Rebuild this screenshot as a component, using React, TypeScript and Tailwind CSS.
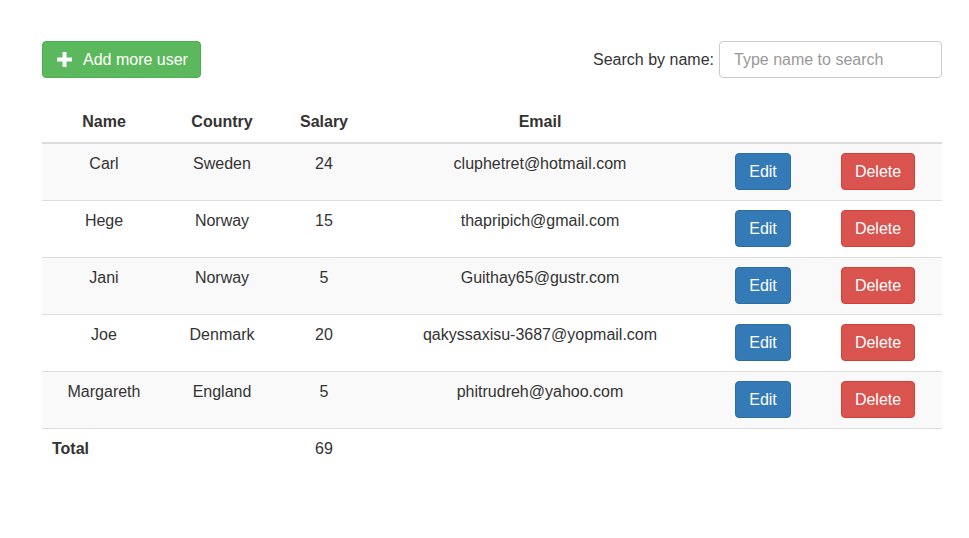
import { useState } from 'react';

interface User {
  name: string;
  country: string;
  salary: number;
  email: string;
}

const users: User[] = [
  { name: 'Carl', country: 'Sweden', salary: 24, email: 'cluphetret@hotmail.com' },
  { name: 'Hege', country: 'Norway', salary: 15, email: 'thapripich@gmail.com' },
  { name: 'Jani', country: 'Norway', salary: 5, email: 'Guithay65@gustr.com' },
  { name: 'Joe', country: 'Denmark', salary: 20, email: 'qakyssaxisu-3687@yopmail.com' },
  { name: 'Margareth', country: 'England', salary: 5, email: 'phitrudreh@yahoo.com' },
];

export default function App() {
  const [query, setQuery] = useState('');
  const rows = users.filter((u) => u.name.toLowerCase().includes(query.toLowerCase()));
  const total = rows.reduce((sum, u) => sum + u.salary, 0);

  return (
    <div className="min-h-screen bg-white text-[#333] text-[16px] leading-[20px] font-['Liberation_Sans',Arial,sans-serif]">
      <div className="w-[900px] ml-[42px] pt-[41px]">
        {/* Toolbar */}
        <div className="flex items-center justify-between">
          <button className="flex items-center h-[37px] w-[159px] pl-[14px] rounded-[4px] border border-[#4cae4c] bg-[#5cb85c] text-white">
            <svg width="15" height="15" viewBox="0 0 15 15" className="mr-[11px]">
              <path d="M5.5 0h4v5.5H15v4H9.5V15h-4V9.5H0v-4h5.5z" fill="white" />
            </svg>
            <span>Add more user</span>
          </button>
          <div className="flex items-center">
            <label className="mr-[5px]">Search by name:</label>
            <input
              value={query}
              onChange={(e) => setQuery(e.target.value)}
              placeholder="Type name to search"
              className="h-[37px] w-[223px] px-[14px] rounded-[4px] border border-[#ccc] outline-none placeholder:text-[#999]"
            />
          </div>
        </div>

        {/* Table */}
        <table className="mt-[23px] w-full table-fixed border-collapse">
          <colgroup>
            <col className="w-[124px]" />
            <col className="w-[112px]" />
            <col className="w-[92px]" />
            <col className="w-[340px]" />
            <col className="w-[104px]" />
            <col className="w-[128px]" />
          </colgroup>
          <thead>
            <tr className="border-b-2 border-[#ddd]">
              <th className="pt-[11px] pb-[10px] font-bold text-center">Name</th>
              <th className="pt-[11px] pb-[10px] font-bold text-center">Country</th>
              <th className="pt-[11px] pb-[10px] font-bold text-center">Salary</th>
              <th className="pt-[11px] pb-[10px] font-bold text-center">Email</th>
              <th></th>
              <th></th>
            </tr>
          </thead>
          <tbody>
            {rows.map((u, i) => (
              <tr key={u.name} className={`border-b border-[#ddd] ${i % 2 === 0 ? 'bg-[#f9f9f9]' : 'bg-white'}`}>
                <td className="pt-[10px] align-top text-center">{u.name}</td>
                <td className="pt-[10px] align-top text-center">{u.country}</td>
                <td className="pt-[10px] align-top text-center">{u.salary}</td>
                <td className="pt-[10px] align-top text-center">{u.email}</td>
                <td className="pt-[9px] pb-[10px] align-top text-left pl-[25px]">
                  <button className="h-[37px] w-[56px] rounded-[4px] border border-[#2e6da4] bg-[#337ab7] text-white">
                    Edit
                  </button>
                </td>
                <td className="pt-[9px] pb-[10px] align-top text-left pl-[27px]">
                  <button className="h-[37px] w-[74px] rounded-[4px] border border-[#d43f3a] bg-[#d9534f] text-white">
                    Delete
                  </button>
                </td>
              </tr>
            ))}
          </tbody>
          <tfoot>
            <tr>
              <td className="pt-[10px] pb-[10px] pl-[10px] font-bold text-left">Total</td>
              <td></td>
              <td className="pt-[10px] pb-[10px] text-center">{total}</td>
              <td></td>
              <td></td>
              <td></td>
            </tr>
          </tfoot>
        </table>
      </div>
    </div>
  );
}
